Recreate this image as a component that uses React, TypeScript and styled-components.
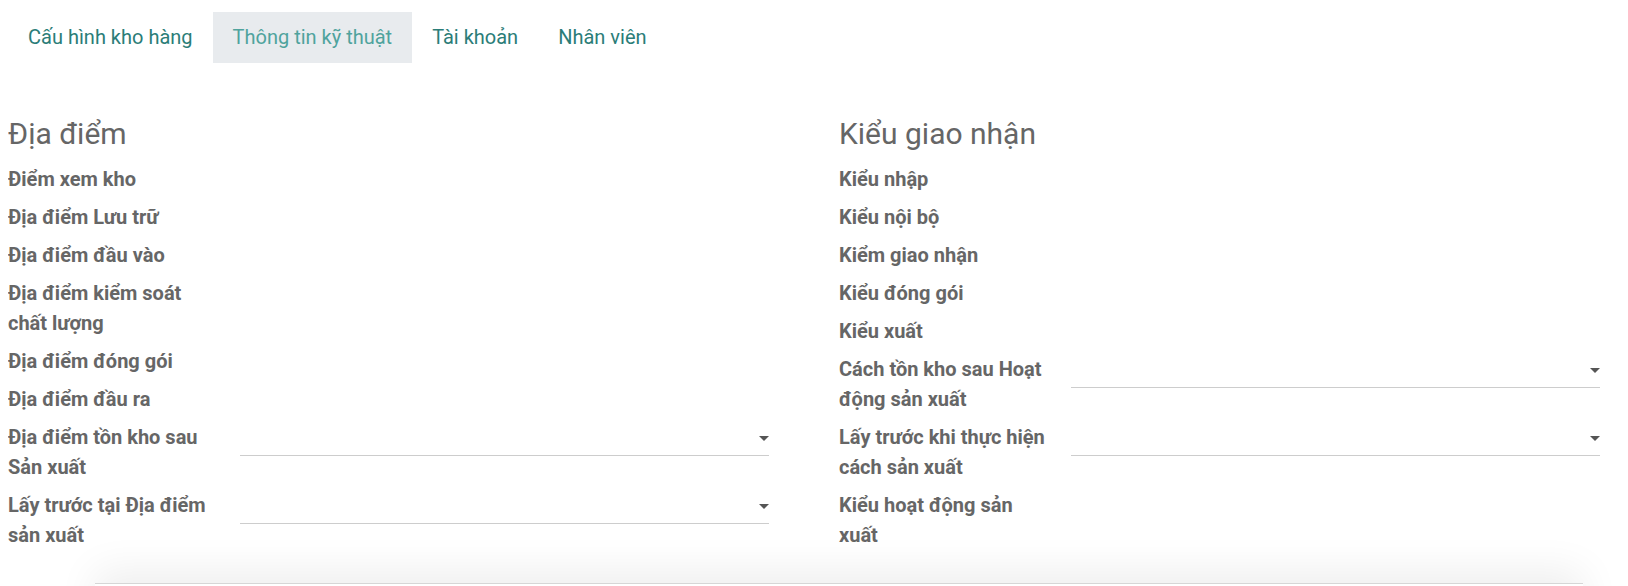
import React from 'react';
import styled, { createGlobalStyle } from 'styled-components';

const GlobalStyle = createGlobalStyle`
  html, body {
    overflow: hidden;
    background: #fff;
  }
  body {
    margin: 8px;
    font-family: Roboto, 'Liberation Sans', sans-serif;
    color: #666;
  }
`;

const TabBar = styled.div`
  display: flex;
  padding-top: 4px;
`;

interface TabProps {
  active?: boolean;
}
const Tab = styled.div<TabProps>`
  padding: 13px 20px;
  font-size: 20px;
  line-height: 25px;
  color: ${(props) => (props.active ? '#4fa39d' : '#2b7d78')};
  background: ${(props) => (props.active ? '#e8ebee' : 'transparent')};
  white-space: nowrap;
`;

const Form = styled.div`
  display: grid;
  grid-template-columns: 1fr 1fr;
  column-gap: 70px;
  margin-top: 53px;
  padding-right: 20px;
`;

const Group = styled.div``;

const Heading = styled.h2`
  margin: 0 0 8px;
  font-size: 30px;
  line-height: 36px;
  font-weight: 400;
  color: #666;
`;

const Row = styled.div`
  display: grid;
  grid-template-columns: 232px 1fr;
`;

const Label = styled.div`
  padding: 4px 20px 4px 0;
  font-size: 20px;
  line-height: 30px;
  font-weight: 700;
  color: #666;
`;

const Value = styled.div`
  padding: 4px 0;
`;

const Select = styled.div`
  height: 34px;
  box-sizing: border-box;
  border-bottom: 1px solid #cdcdcd;
  display: flex;
  align-items: center;
  justify-content: flex-end;
`;

const Caret = styled.span`
  width: 0;
  height: 0;
  border-left: 5px solid transparent;
  border-right: 5px solid transparent;
  border-top: 5px solid #555;
`;

const SheetEdge = styled.div`
  margin: 29px 37px 0 87px;
  height: 60px;
  background: #fff;
  border-top: 1px solid #d6d6d6;
  box-shadow: 0 -12px 40px rgba(0, 0, 0, 0.07);
`;

interface Field {
  label: string;
  select?: boolean;
}

const locations: Field[] = [
  { label: 'Điểm xem kho' },
  { label: 'Địa điểm Lưu trữ' },
  { label: 'Địa điểm đầu vào' },
  { label: 'Địa điểm kiểm soát chất lượng' },
  { label: 'Địa điểm đóng gói' },
  { label: 'Địa điểm đầu ra' },
  { label: 'Địa điểm tồn kho sau Sản xuất', select: true },
  { label: 'Lấy trước tại Địa điểm sản xuất', select: true },
];

const pickingTypes: Field[] = [
  { label: 'Kiểu nhập' },
  { label: 'Kiểu nội bộ' },
  { label: 'Kiểm giao nhận' },
  { label: 'Kiểu đóng gói' },
  { label: 'Kiểu xuất' },
  { label: 'Cách tồn kho sau Hoạt động sản xuất', select: true },
  { label: 'Lấy trước khi thực hiện cách sản xuất', select: true },
  { label: 'Kiểu hoạt động sản xuất' },
];

const FieldGroup = ({ title, fields }: { title: string; fields: Field[] }) => (
  <Group>
    <Heading>{title}</Heading>
    {fields.map((f) => (
      <Row key={f.label}>
        <Label>{f.label}</Label>
        <Value>
          {f.select && (
            <Select>
              <Caret />
            </Select>
          )}
        </Value>
      </Row>
    ))}
  </Group>
);

const tabs = ['Cấu hình kho hàng', 'Thông tin kỹ thuật', 'Tài khoản', 'Nhân viên'];

const App = () => {
  return (
    <>
      <GlobalStyle />
      <TabBar>
        {tabs.map((t, i) => (
          <Tab key={t} active={i === 1}>
            {t}
          </Tab>
        ))}
      </TabBar>
      <Form>
        <FieldGroup title="Địa điểm" fields={locations} />
        <FieldGroup title="Kiểu giao nhận" fields={pickingTypes} />
      </Form>
      <SheetEdge />
    </>
  );
};

export default App;
